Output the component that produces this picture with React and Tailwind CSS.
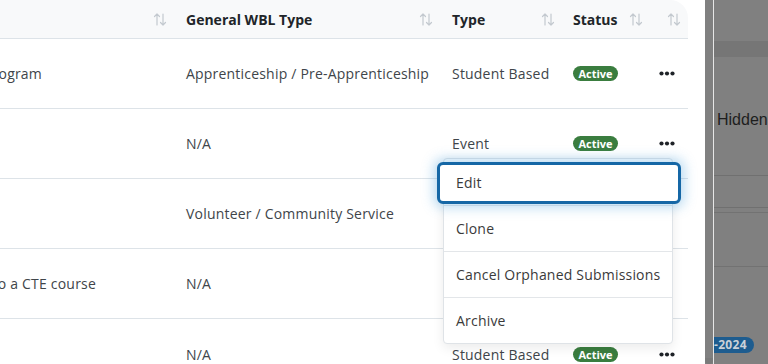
import React from "react";

const font = { fontFamily: "'Open Sans', 'Noto Sans', sans-serif" };

function SortIcon() {
  return (
    <svg width="14" height="13" viewBox="0 0 14 13" fill="none" stroke="#c3c9cf" strokeWidth="1.2" strokeLinecap="round" strokeLinejoin="round">
      <path d="M4 12V1M1.5 3.5 4 1l2.5 2.5" />
      <path d="M10 1v11M7.5 9.5 10 12l2.5-2.5" />
    </svg>
  );
}

function Dots() {
  return (
    <svg width="16" height="5" viewBox="0 0 16 5" fill="#1f2328">
      <circle cx="2.5" cy="2.5" r="2.1" />
      <circle cx="8" cy="2.5" r="2.1" />
      <circle cx="13.5" cy="2.5" r="2.1" />
    </svg>
  );
}

function Active() {
  return (
    <span className="inline-flex h-[15px] w-[45px] items-center justify-center rounded-full bg-[#3a7d3f] text-[11px] font-bold leading-none tracking-normal text-white">
      Active
    </span>
  );
}

const rows = [
  { first: "Registered Apprenticeship Program", firstEnd: "w-[42px]", wbl: "Apprenticeship / Pre-Apprenticeship", type: "Student Based" },
  { first: "", firstEnd: "w-[42px]", wbl: "N/A", type: "Event" },
  { first: "", firstEnd: "w-[42px]", wbl: "Volunteer / Community Service", type: "" },
  { first: "Internship connected to a CTE course", firstEnd: "w-[96px]", wbl: "N/A", type: "" },
  { first: "", firstEnd: "w-[42px]", wbl: "N/A", type: "Student Based" },
];

const menu = ["Clone", "Cancel Orphaned Submissions", "Archive"];

export default function App() {
  return (
    <div className="relative flex h-[364px] w-[768px] overflow-hidden bg-white text-[14px] tracking-[0.2px] text-[#40454a]" style={font}>
      <div className="w-[705px] shrink-0 bg-white">
        <div className="w-[688px]">
          <div className="flex h-[39px] items-center rounded-tr-[18px] border-b border-[#dde3e8] bg-[#f8f9fa] font-bold tracking-normal text-[#212529]">
            <div className="flex w-[186px] justify-end pr-[19px]"><SortIcon /></div>
            <div className="flex w-[266px] items-center justify-between pr-[19px]">
              <span>General WBL Type</span>
              <SortIcon />
            </div>
            <div className="flex w-[121px] items-center justify-between pr-[18px]">
              <span>Type</span>
              <SortIcon />
            </div>
            <div className="flex w-[94px] items-center gap-[12px]">
              <span>Status</span>
              <SortIcon />
            </div>
            <div className="flex"><SortIcon /></div>
          </div>
          {rows.map((r, i) => (
            <div key={i} className={`flex h-[70px] items-center ${i < 4 ? "border-b border-[#dde3e8]" : ""}`}>
              <div className="w-[186px]">
                <div className={`flex justify-end whitespace-nowrap ${r.firstEnd}`}>
                  <span>{r.first}</span>
                </div>
              </div>
              <div className="w-[266px] whitespace-nowrap">{r.wbl}</div>
              <div className="w-[121px] whitespace-nowrap">{r.type}</div>
              <div className="flex w-[86px]">{i !== 2 && i !== 3 ? <Active /> : null}</div>
              <div className="flex">{i !== 2 && i !== 3 ? <Dots /> : null}</div>
            </div>
          ))}
        </div>
      </div>

      <div className="flex w-[8px] shrink-0 bg-[#808080]">
        <div className="mt-auto h-[6px] w-full rounded-b-[4px] bg-[#7a7a7a]" />
      </div>
      <div className="w-px shrink-0 bg-[#e6e6e6]" />
      <div className="flex flex-1 flex-col bg-[#808080]">
        <div className="mt-[41px] h-[16px] bg-[#767676]" />
        <div className="pl-[3px] pt-[53px] text-[16px] leading-[20px] tracking-normal text-[#1e1e1e]" style={{ fontFamily: "'Liberation Sans', sans-serif" }}>
          Hidden
        </div>
        <div className="mt-[45px] h-px bg-[#707070]" />
        <div className="mt-[31px] h-px bg-[#707070]" />
        <div className="mt-[4px] h-px bg-[#727272]" />
        <div className="mt-[53px] h-px bg-[#727272]" />
        <div className="mt-[70px] flex">
          <span className="flex h-[16px] items-center rounded-r-full bg-[#1d5c8f] pr-[7px] text-[12px] font-bold tracking-[0.3px] text-[#c9d1d9]">-2024</span>
        </div>
      </div>

      <div className="absolute left-[443px] top-[158px] w-[230px] rounded-[4px] border border-[#dfe3e7] bg-white text-[#3a3a3a] shadow-[0_4px_12px_rgba(0,0,0,0.08)]">
        <div className="relative flex h-[46px] items-center pl-[12px]">
          <div className="absolute bottom-[1px] left-[-7px] right-[-9px] top-[3px] rounded-[6px] border-[3px] border-[#1567a6] bg-white shadow-[0_0_12px_4px_rgba(74,160,220,0.35)]" />
          <span className="relative">Edit</span>
        </div>
        {menu.map((m) => (
          <div key={m} className="flex h-[46px] items-center border-t border-[#e3e6e9] pl-[12px]">
            {m}
          </div>
        ))}
      </div>
    </div>
  );
}
